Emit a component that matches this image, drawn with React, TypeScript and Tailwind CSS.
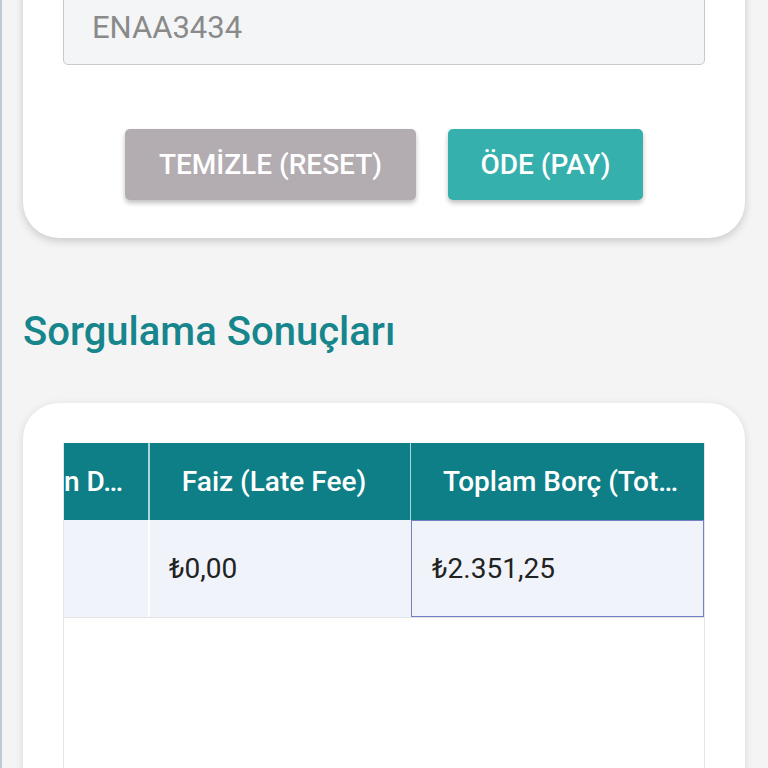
export default function App() {
  return (
    <div
      className="min-h-screen overflow-hidden bg-[#f4f4f4] border-l-2 border-[#bfc9d8]"
      style={{ fontFamily: 'Roboto, "Noto Sans", sans-serif' }}
    >
      <div className="pl-[21px] pr-[23px]">
        {/* Search card (top is scrolled out of view) */}
        <div className="mt-[-55px] rounded-[36px] bg-white px-10 pt-10 pb-[38px] shadow-[0_3px_8px_rgba(0,0,0,0.18)]">
          <div className="flex h-[80px] items-end rounded-[5px] border border-[#c9c9c9] bg-[#f4f5f7] px-7 pb-[21px]">
            <span className="text-[31px] leading-none text-[#8a8a8a]">ENAA3434</span>
          </div>

          <div className="mt-16 flex justify-center gap-8">
            <button className="h-[71px] w-[291px] rounded-[5px] bg-[#b3adb2] text-[28px] font-medium text-white shadow-[0_3px_5px_rgba(0,0,0,0.25)]">
              TEMİZLE (RESET)
            </button>
            <button className="h-[71px] w-[195px] rounded-[5px] bg-[#35b0ad] text-[28px] font-medium text-white shadow-[0_3px_5px_rgba(0,0,0,0.25)]">
              ÖDE (PAY)
            </button>
          </div>
        </div>

        <h2 className="mt-[72px] mb-[49px] text-[40px] font-medium leading-[44px] text-[#17858c]">
          Sorgulama Sonuçları
        </h2>

        {/* Results card */}
        <div className="rounded-[36px] bg-white px-10 pt-10 pb-0 shadow-[0_2px_8px_rgba(0,0,0,0.12)]">
          <div className="border-x border-[#e3e3e3]">
            <div className="flex h-[77px] bg-[#0e7f86] text-[28px] font-medium text-white">
              <div className="flex w-[86px] shrink-0 items-center overflow-hidden whitespace-nowrap border-r-2 border-[#a9d6d6]">
                n D…
              </div>
              <div className="flex w-[261px] shrink-0 items-center justify-center pr-3 border-r border-[#a9d6d6]">
                Faiz (Late Fee)
              </div>
              <div className="flex min-w-0 flex-1 items-center justify-center pl-[32px] pr-[24px]">
                <span className="truncate">Toplam Borç (Total Debt)</span>
              </div>
            </div>

            <div className="flex h-[98px] border-b border-[#e3e3e3] bg-[#f1f3fa] text-[28px] text-[#222]">
              <div className="w-[86px] shrink-0 border-r-2 border-white" />
              <div className="flex w-[261px] shrink-0 items-center pl-[19px]">₺0,00</div>
              <div className="flex min-w-0 flex-1 items-center border-[1.5px] border-[#7380c4] pl-5">₺2.351,25</div>
            </div>

            <div className="h-[200px] bg-white" />
          </div>
        </div>
      </div>
    </div>
  );
}
